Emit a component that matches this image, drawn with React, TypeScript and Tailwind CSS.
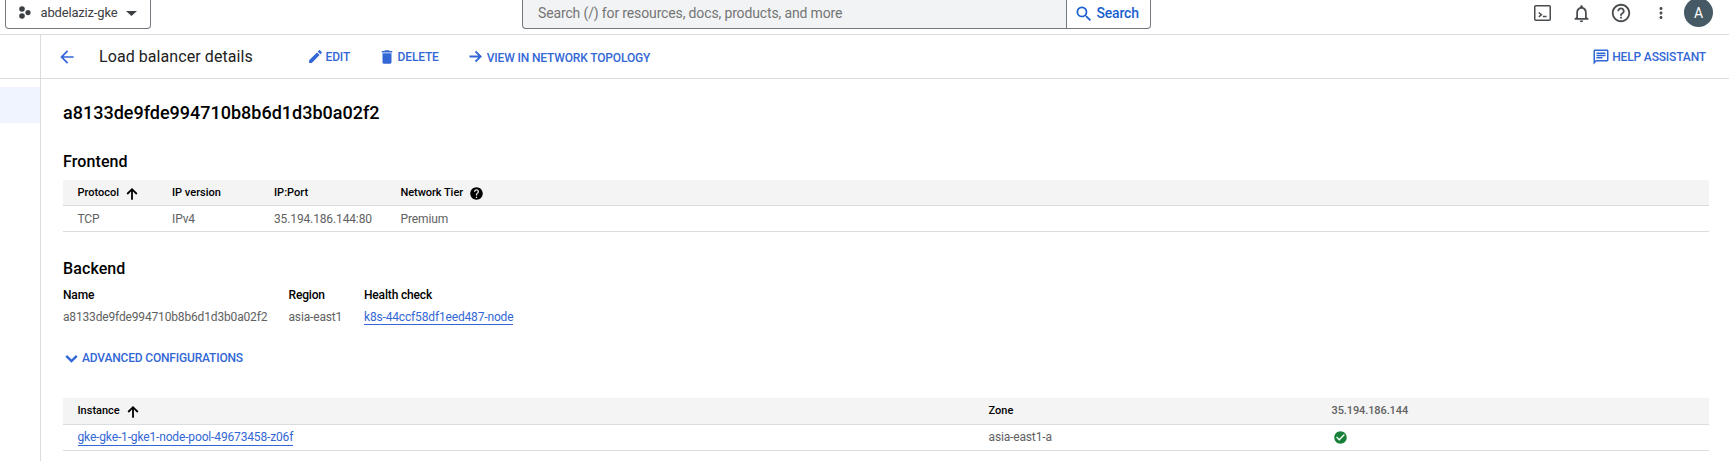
import React from "react";
import {
  MdArrowBack, MdEdit, MdDelete, MdSearch,
  MdNotificationsNone, MdHelpOutline, MdHelp, MdMoreVert, MdOutlineChat,
  MdCheckCircle,
} from "react-icons/md";

const blue = "text-[#3367d6]";

const strokes = {
  up: "M12 20.5V5M4.8 12L12 4.8l7.2 7.2",
  right: "M3.5 12H19M12 4.8l7.2 7.2-7.2 7.2",
  down: "M6 9l6 6 6-6",
};

function StrokeIcon({ name, size, className = "" }: { name: keyof typeof strokes; size: number; className?: string }) {
  return (
    <svg className={`shrink-0 ${className}`} width={size} height={size} viewBox="0 0 24 24" fill="none" stroke="currentColor" strokeWidth="2.7">
      <path d={strokes[name]} />
    </svg>
  );
}

function TopBar() {
  return (
    <header className="flex h-[35px] shrink-0 items-start border-b border-[#dadce0] text-[#3c4043]">
      <div className="ml-[5px] flex h-[29px] w-[146px] items-center rounded-b border border-t-0 border-[#747980] pb-[2px] pl-[12px]">
        <svg className="mb-[2px] shrink-0" width="13" height="13" viewBox="0 0 13 13" fill="#3c4043">
          <circle cx="4" cy="3" r="2.8" />
          <circle cx="4" cy="10" r="2.8" />
          <circle cx="10" cy="6.6" r="2.6" />
        </svg>
        <span className="ml-[9.5px] w-[76px] whitespace-nowrap text-[13px] tracking-[-0.17px]">abdelaziz-gke</span>
        <svg className="ml-[9px] shrink-0" width="11" height="5" viewBox="0 0 11 5" fill="#3c4043"><path d="M0 0h11L5.5 5z" /></svg>
      </div>
      <div className="ml-[371px] flex h-[29px] w-[544px] items-center rounded-bl border border-r-0 border-t-0 border-[#747980] bg-[#f1f3f4] pb-[1px] pl-[15px] text-[14px] tracking-[-0.14px] text-[#757575]">
        Search (/) for resources, docs, products, and more
      </div>
      <div className="flex h-[29px] w-[85px] items-center rounded-br border border-t-0 border-[#747980] pb-[1px] pl-[7px] text-[14px] font-medium tracking-[-0.2px] text-[#1a5fcf]">
        <MdSearch size={20} />
        <span className="ml-[2.5px]">Search</span>
      </div>
      <div className="ml-auto flex h-[26px] items-center pr-[16px] text-[#4a4d50]">
        <svg width="17" height="16" viewBox="0 0 17 16" fill="none" stroke="currentColor" strokeWidth="1.5">
          <rect x="0.75" y="0.75" width="15.5" height="14.5" rx="1" />
          <path d="M4.8 7.5l2.6 2.2-2.6 2.2M8.8 11.6h3.8" />
        </svg>
        <MdNotificationsNone className="ml-[20px]" size={21} />
        <MdHelpOutline className="ml-[18px]" size={22} />
        <MdMoreVert className="ml-[20px]" size={18} />
        <span className="mb-px ml-[14px] flex size-[29px] items-center justify-center rounded-full bg-[#455a64] pt-px text-[14px] text-white">A</span>
      </div>
    </header>
  );
}

function Toolbar() {
  return (
    <div className={`flex h-[44px] shrink-0 items-center border-b border-[#dadce0] text-[12px] font-medium tracking-[-0.15px] ${blue}`}>
      <MdArrowBack className="ml-[15.5px]" size={20} />
      <h1 className="ml-[22.5px] w-[154px] whitespace-nowrap text-[16px] font-normal tracking-[0.07px] text-[#212121]">Load balancer details</h1>
      <MdEdit className="ml-[53.5px]" size={17} />
      <span className="ml-[2px]">EDIT</span>
      <MdDelete className="ml-[27.5px]" size={18} />
      <span className="ml-[2px]">DELETE</span>
      <StrokeIcon name="right" className="ml-[28px]" size={17} />
      <span className="ml-[3px] pt-[2px]">VIEW IN NETWORK TOPOLOGY</span>
      <MdOutlineChat className="ml-auto" size={18} />
      <span className="mr-[23px] ml-[2px]">HELP ASSISTANT</span>
    </div>
  );
}

function Frontend() {
  const grid = "grid grid-cols-[94.5px_102px_126.5px_1fr] items-center border-b border-[#dadce0] pl-[14.5px]";
  return (
    <section className="w-[1646px]">
      <h3 className="mt-[27px] h-[20px] text-[16px] leading-[20px] font-medium tracking-[0.1px] text-black">Frontend</h3>
      <div className={`${grid} mt-[8px] h-[26px] bg-[#f4f4f4] pt-px text-[11px] font-medium text-black`}>
        <span className="flex items-center gap-[5px]">Protocol <StrokeIcon name="up" className="mt-px" size={16} /></span>
        <span>IP version</span>
        <span>IP:Port</span>
        <span className="flex items-center gap-[6px] tracking-[-0.05px]">Network Tier <MdHelp size={15} /></span>
      </div>
      <div className={`${grid} h-[26px] text-[12px] tracking-[-0.13px] text-[#616161]`}>
        <span>TCP</span><span>IPv4</span><span>35.194.186.144:80</span><span>Premium</span>
      </div>
    </section>
  );
}

function Backend() {
  return (
    <section className="w-[1646px]">
      <h3 className="mt-[27px] h-[20px] text-[16px] leading-[20px] font-medium tracking-[0.1px] text-black">Backend</h3>
      <div className="mt-[7px] grid grid-cols-[225.5px_75.5px_1fr] text-[12px] leading-[18px] tracking-[-0.16px]">
        <span className="font-medium text-black">Name</span>
        <span className="font-medium text-black">Region</span>
        <span className="font-medium text-black">Health check</span>
        <span className="mt-[4px] text-[#616161]">a8133de9fde994710b8b6d1d3b0a02f2</span>
        <span className="mt-[4px] text-[#616161]">asia-east1</span>
        <a className={`mt-[4px] h-[17px] justify-self-start border-b border-[#3367d6] ${blue}`}>k8s-44ccf58df1eed487-node</a>
      </div>
      <div className={`mt-[23px] flex h-[18px] items-center text-[12px] font-medium tracking-[-0.18px] ${blue}`}>
        <StrokeIcon name="down" className="-ml-[2px]" size={21} />
        <span>ADVANCED CONFIGURATIONS</span>
      </div>
    </section>
  );
}

function Instances() {
  const grid = "grid grid-cols-[911px_343px_1fr] items-center border-b border-[#dadce0] pl-[14.5px]";
  return (
    <section className="mt-[31px] w-[1646px]">
      <div className={`${grid} h-[27px] bg-[#f4f4f4] text-[11px] font-medium text-black`}>
        <span className="flex items-center gap-[5.5px]">Instance <StrokeIcon name="up" className="mt-[2px]" size={16} /></span>
        <span>Zone</span>
        <span className="tracking-[-0.1px] text-[#616161]">35.194.186.144</span>
      </div>
      <div className={`${grid} h-[26px] pb-px text-[12px] leading-[18px] tracking-[-0.15px] text-[#616161]`}>
        <a className={`h-[18px] justify-self-start border-b border-[#3367d6] ${blue}`}>gke-gke-1-gke1-node-pool-49673458-z06f</a>
        <span>asia-east1-a</span>
        <MdCheckCircle size={15} className="ml-px text-[#188038]" />
      </div>
    </section>
  );
}

export default function App() {
  return (
    <div className="flex h-[461px] w-[1729px] flex-col overflow-hidden bg-white font-['Roboto',sans-serif]">
      <TopBar />
      <div className="flex flex-1">
        <aside className="w-[41px] shrink-0 border-r border-[#dadce0]">
          <div className="h-[44px] border-b border-[#dadce0]" />
          <div className="mt-[8px] h-[36px] bg-[#f0f4ff]" />
        </aside>
        <main className="flex flex-1 flex-col">
          <Toolbar />
          <div className="pl-[22px]">
            <h2 className="mt-[22px] h-[24px] text-[18px] leading-[24px] font-medium text-black">a8133de9fde994710b8b6d1d3b0a02f2</h2>
            <Frontend />
            <Backend />
            <Instances />
          </div>
        </main>
      </div>
    </div>
  );
}
